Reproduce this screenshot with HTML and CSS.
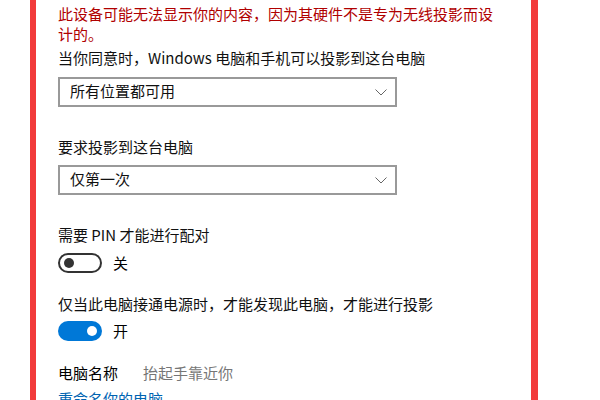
FILE: index.html
```html
<!DOCTYPE html>
<html lang="zh-CN">
<head>
<meta charset="utf-8">
<link rel="stylesheet" href="styles.css">
</head>
<body>
<div class="frame">
  <div class="panel">
    <p class="warning">此设备可能无法显示你的内容，因为其硬件不是专为无线投影而设计的。</p>
    <p class="label label-first">当你同意时，Windows 电脑和手机可以投影到这台电脑</p>
    <div class="select">
      <span class="select-text">所有位置都可用</span>
      <svg class="chev" width="12" height="7" viewBox="0 0 12 7"><path d="M0.5 0.5 L6 6 L11.5 0.5" fill="none" stroke="#666" stroke-width="1"/></svg>
    </div>
    <p class="label label-gap">要求投影到这台电脑</p>
    <div class="select">
      <span class="select-text">仅第一次</span>
      <svg class="chev" width="12" height="7" viewBox="0 0 12 7"><path d="M0.5 0.5 L6 6 L11.5 0.5" fill="none" stroke="#666" stroke-width="1"/></svg>
    </div>
    <p class="label label-gap">需要 PIN 才能进行配对</p>
    <div class="toggle-row">
      <span class="toggle off"><span class="knob"></span></span>
      <span class="state">关</span>
    </div>
    <p class="label label-gap2">仅当此电脑接通电源时，才能发现此电脑，才能进行投影</p>
    <div class="toggle-row">
      <span class="toggle on"><span class="knob"></span></span>
      <span class="state">开</span>
    </div>
    <div class="name-row">
      <span class="name-key">电脑名称</span>
      <span class="name-val">抬起手靠近你</span>
    </div>
    <a class="rename" href="#">重命名你的电脑</a>
  </div>
</div>
</body>
</html>
```

FILE: styles.css
```css
html, body {
  margin: 0;
  padding: 0;
  background: #fff;
  height: 400px;
  overflow: hidden;
}
body {
  font-family: "Microsoft YaHei", "Noto Sans CJK SC", "Noto Sans", sans-serif;
  font-size: 15px;
  color: #000;
}
.frame {
  margin-left: 30px;
  width: 495px;
  height: 400px;
  border-left: 6px solid #f23b3b;
  border-right: 7px solid #f23b3b;
  overflow: hidden;
}
.panel {
  padding: 4px 0 0 22px;
  width: 440px;
}
p {
  margin: 0;
}
.warning {
  color: #b00000;
  line-height: 20px;
  font-size: 15px;
}
.label {
  line-height: 20px;
  color: #111;
}
.label-first {
  margin-top: 4px;
}
.label-gap {
  margin-top: 30px;
}
.label-gap2 {
  margin-top: 21px;
}
.select {
  box-sizing: border-box;
  width: 339px;
  height: 30px;
  border: 2px solid #999;
  margin-top: 9px;
  display: flex;
  align-items: center;
  justify-content: space-between;
  padding: 0 8px 0 10px;
  color: #111;
}
.select-text {
  line-height: 20px;
  margin-top: -2px;
}
.label-gap + .select {
  margin-top: 8px;
}
.chev {
  display: block;
}
.toggle-row {
  display: flex;
  align-items: center;
  gap: 11px;
  margin-top: 8px;
  height: 20px;
}
.toggle {
  box-sizing: border-box;
  width: 44px;
  height: 20px;
  border-radius: 10px;
  display: flex;
  align-items: center;
  padding: 0 4px;
}
.toggle.off {
  border: 2px solid #333;
  justify-content: flex-start;
}
.toggle.on {
  background: #0078d7;
  justify-content: flex-end;
  padding: 0 5px;
}
.knob {
  width: 10px;
  height: 10px;
  border-radius: 50%;
}
.toggle.off .knob {
  background: #333;
}
.toggle.on .knob {
  background: #fff;
}
.state {
  line-height: 20px;
}
.label-gap2 + .toggle-row {
  margin-top: 7px;
}
.name-row {
  margin-top: 22px;
  line-height: 20px;
  display: flex;
  gap: 25px;
}
.name-val {
  color: #767676;
}
.rename {
  display: block;
  margin-top: 6px;
  line-height: 20px;
  color: #0063b1;
  text-decoration: none;
}
```
